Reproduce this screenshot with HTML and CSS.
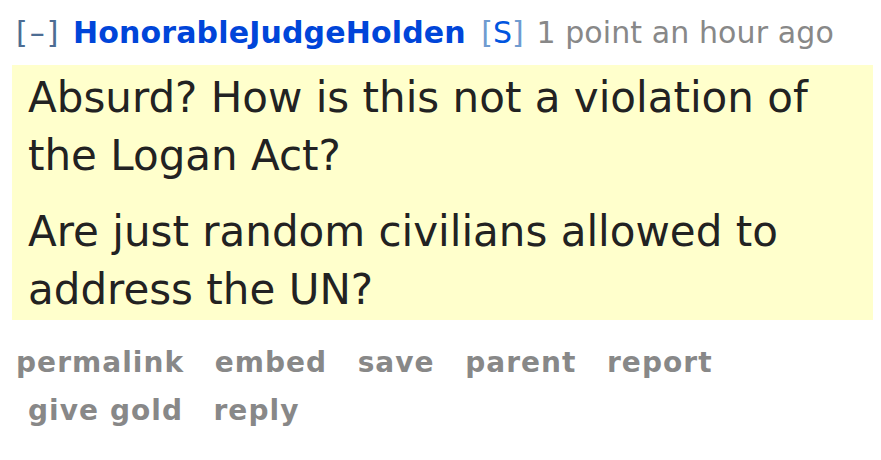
FILE: index.html
```html
<!DOCTYPE html>
<html>
<head>
<meta charset="utf-8">
<link rel="stylesheet" href="styles.css">
</head>
<body>
<div class="comment">
  <p class="tagline">
    <a class="expand">[–]</a>
    <a class="author">HonorableJudgeHolden</a>
    <span class="flair">[<a class="submitter">S</a>]</span>
    <span class="score">1 point</span>
    <time class="live">an hour ago</time>
  </p>
  <div class="usertext">
    <p>Absurd? How is this not a violation of the Logan Act?</p>
    <p>Are just random civilians allowed to address the UN?</p>
  </div>
  <ul class="buttons">
    <li><a>permalink</a></li>
    <li><a>embed</a></li>
    <li><a>save</a></li>
    <li><a>parent</a></li>
    <li><a>report</a></li>
    <li><a>give gold</a></li>
    <li><a>reply</a></li>
  </ul>
</div>
</body>
</html>
```

FILE: styles.css
```css
html, body {
  margin: 0;
  padding: 0;
  background: #ffffff;
}
body {
  font-family: "DejaVu Sans", Verdana, sans-serif;
}
.comment {
  padding: 14px 8px 0 12px;
}
.tagline {
  margin: 0 0 0 4px;
  font-size: 30px;
  line-height: 38px;
  color: #888888;
  white-space: nowrap;
}
.expand {
  color: #4d6d94;
  letter-spacing: 2px;
  margin-right: 3px;
}
.author {
  color: #0045d9;
  font-weight: bold;
  letter-spacing: 0.15px;
  margin-right: 6px;
}
.flair {
  color: #6f9bd0;
  margin-right: 3px;
}
.submitter {
  color: #0055df;
}
.score, .live {
  letter-spacing: 0.1px;
}
.usertext {
  background: #ffffcc;
  margin-top: 13px;
  padding: 4px 16px 1px 16px;
  width: 829px;
}
.usertext p {
  margin: 0 0 18px 0;
  font-size: 42px;
  line-height: 58px;
  color: #222222;
}
.usertext p:last-child {
  margin-bottom: 0;
}
.buttons {
  list-style: none;
  margin: 19px 0 0 0;
  padding: 0 0 0 4px;
  display: flex;
  flex-wrap: wrap;
  width: 760px;
}
.buttons li {
  font-size: 28px;
  line-height: 48px;
  letter-spacing: 1.05px;
  font-weight: bold;
  color: #888888;
  padding-left: 12px;
  margin-right: 18.5px;
}
.buttons li:first-child {
  padding-left: 0;
}
```
